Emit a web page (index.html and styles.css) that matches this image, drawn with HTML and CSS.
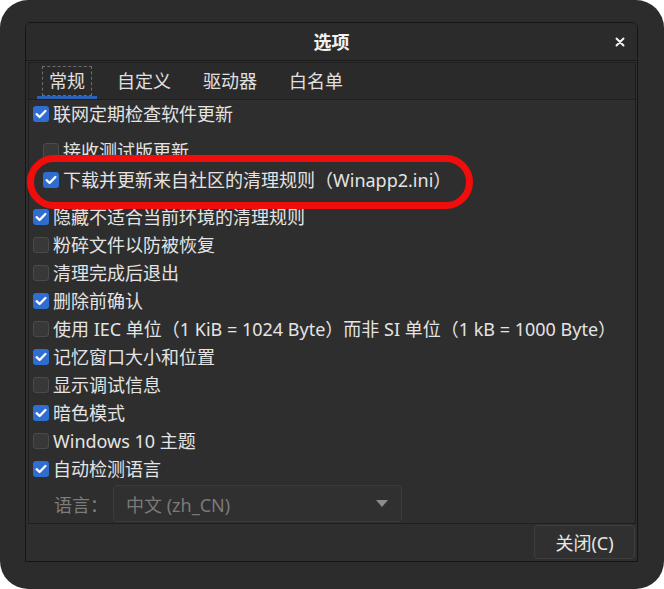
FILE: index.html
```html
<!DOCTYPE html>
<html lang="zh-CN">
<head>
<meta charset="utf-8">
<title>选项</title>
<link rel="stylesheet" href="styles.css">
</head>
<body>
<div class="frame">
  <div class="window">
    <div class="titlebar">
      <span class="title">选项</span>
      <span class="close-x">
        <svg width="10" height="10" viewBox="0 0 10 10"><path d="M1.5 1.5 L8.5 8.5 M8.5 1.5 L1.5 8.5" stroke="#f2f2f2" stroke-width="2" stroke-linecap="round"/></svg>
      </span>
    </div>
    <div class="client">
      <div class="tabpane">
        <div class="tabbar">
          <div class="tab active"><span class="tab-label">常规</span></div>
          <div class="tab"><span class="tab-label">自定义</span></div>
          <div class="tab"><span class="tab-label">驱动器</span></div>
          <div class="tab"><span class="tab-label">白名单</span></div>
        </div>
        <div class="page">
          <div class="row"><span class="cb on"></span><span>联网定期检查软件更新</span></div>
          <div class="row sub gap-a"><span class="cb"></span><span>接收测试版更新</span></div>
          <div class="row sub gap-b"><span class="cb on"></span><span>下载并更新来自社区的清理规则（Winapp2.ini）</span></div>
          <div class="row gap-a"><span class="cb on"></span><span>隐藏不适合当前环境的清理规则</span></div>
          <div class="row"><span class="cb"></span><span>粉碎文件以防被恢复</span></div>
          <div class="row"><span class="cb"></span><span>清理完成后退出</span></div>
          <div class="row"><span class="cb on"></span><span>删除前确认</span></div>
          <div class="row"><span class="cb"></span><span>使用 IEC 单位（1 KiB = 1024 Byte）而非 SI 单位（1 kB = 1000 Byte）</span></div>
          <div class="row"><span class="cb on"></span><span>记忆窗口大小和位置</span></div>
          <div class="row"><span class="cb"></span><span>显示调试信息</span></div>
          <div class="row"><span class="cb on"></span><span>暗色模式</span></div>
          <div class="row"><span class="cb"></span><span>Windows 10 主题</span></div>
          <div class="row"><span class="cb on"></span><span>自动检测语言</span></div>
          <div class="lang-row">
            <span class="lang-label">语言：</span>
            <div class="combo"><span>中文 (zh_CN)</span><span class="arrow"></span></div>
          </div>
          <div class="highlight"></div>
        </div>
      </div>
      <div class="buttons">
        <button class="btn">关闭(C)</button>
      </div>
    </div>
  </div>
</div>
</body>
</html>
```

FILE: styles.css
```css
* { box-sizing: border-box; }

html, body {
  margin: 0;
  padding: 0;
  background: #ffffff;
}

body {
  font-family: "Noto Sans", "Noto Sans CJK SC", sans-serif;
  font-size: 18px;
  color: #e4e4e4;
}

.frame {
  width: 664px;
  height: 589px;
  border-radius: 28px;
  background: #2c2c2c;
  padding: 22px 26px 27px 25px;
}

.window {
  width: 613px;
  height: 540px;
  border: 1px solid #151515;
  border-radius: 6px 6px 0 0;
  background: #2e2e2e;
  display: flex;
  flex-direction: column;
}

/* title bar */
.titlebar {
  position: relative;
  height: 38px;
  flex: none;
  background: #2b2b2b;
  border-bottom: 1px solid #1b1b1b;
  border-radius: 5px 5px 0 0;
  display: flex;
  align-items: center;
  justify-content: center;
}

.title {
  font-weight: bold;
  color: #f2f2f2;
  line-height: 24px;
}

.close-x {
  position: absolute;
  right: 12px;
  top: 14px;
  width: 10px;
  height: 10px;
  display: flex;
}

/* client area */
.client {
  flex: 1;
  display: flex;
  flex-direction: column;
  padding: 1px 1px 0 2px;
}

.tabpane {
  height: 462px;
  border: 1px solid #1f1f1f;
  display: flex;
  flex-direction: column;
  background: #2e2e2e;
}

.tabbar {
  height: 37px;
  flex: none;
  display: flex;
  padding-left: 4px;
  background: #2a2a2a;
  border-bottom: 1px solid #1f1f1f;
}

.tab {
  position: relative;
  padding: 0 9px;
  display: flex;
  align-items: center;
}

.tab-label {
  display: inline-block;
  line-height: 22px;
  padding: 3px 6px;
  border: 1px dashed transparent;
  color: #e0e0e0;
}

.tab.active .tab-label {
  border-color: #6e6e6e;
}

.tab.active::after {
  content: "";
  position: absolute;
  left: 4px;
  right: 4px;
  bottom: 0;
  height: 3px;
  background: #2b62b8;
}

.page {
  position: relative;
  flex: 1;
  padding-left: 4px;
}

.row {
  height: 28px;
  display: flex;
  align-items: center;
  gap: 4px;
  line-height: 28px;
  white-space: nowrap;
}

.row.sub { padding-left: 10px; }
.row.gap-a { margin-top: 9px; }
.row.gap-b { margin-top: 1px; }

.cb {
  flex: none;
  width: 16px;
  height: 16px;
  border-radius: 3px;
  background: #383838;
  border: 1px solid #4b4b4b;
}

.cb.on {
  border: none;
  background: #2f6ed0 url("data:image/svg+xml;utf8,<svg xmlns='http://www.w3.org/2000/svg' width='16' height='16' viewBox='0 0 16 16'><path d='M3.6 8.2 L6.6 11 L12.4 5' fill='none' stroke='white' stroke-width='2.3' stroke-linecap='round' stroke-linejoin='round'/></svg>") center / 16px 16px no-repeat;
}

.lang-row {
  margin-top: 2px;
  height: 37px;
  display: flex;
  align-items: center;
  padding-left: 21px;
}

.lang-label {
  color: #7c7c7c;
  width: 59px;
}

.combo {
  width: 289px;
  height: 37px;
  border: 1px solid #3b3b3b;
  border-radius: 4px;
  background: #303030;
  display: flex;
  align-items: center;
  justify-content: space-between;
  padding: 0 13px 0 12px;
  color: #7a7a7a;
}

.arrow {
  width: 0;
  height: 0;
  border-left: 6px solid transparent;
  border-right: 6px solid transparent;
  border-top: 7px solid #8c8c8c;
}

/* red marker drawn over the third option */
.highlight {
  position: absolute;
  left: -2px;
  top: 55px;
  width: 446px;
  height: 54px;
  border: 7px solid #f20d0d;
  border-radius: 27px;
  pointer-events: none;
}

/* dialog buttons */
.buttons {
  flex: 1;
  display: flex;
  justify-content: flex-end;
  align-items: flex-start;
  padding: 1px 1px 0 0;
}

.btn {
  width: 101px;
  height: 34px;
  border: 1px solid #3e3e3e;
  border-radius: 4px;
  background: #303030;
  color: #e6e6e6;
  font-family: "Noto Sans", "Noto Sans CJK SC", sans-serif;
  font-size: 18px;
  padding: 0;
}
```
